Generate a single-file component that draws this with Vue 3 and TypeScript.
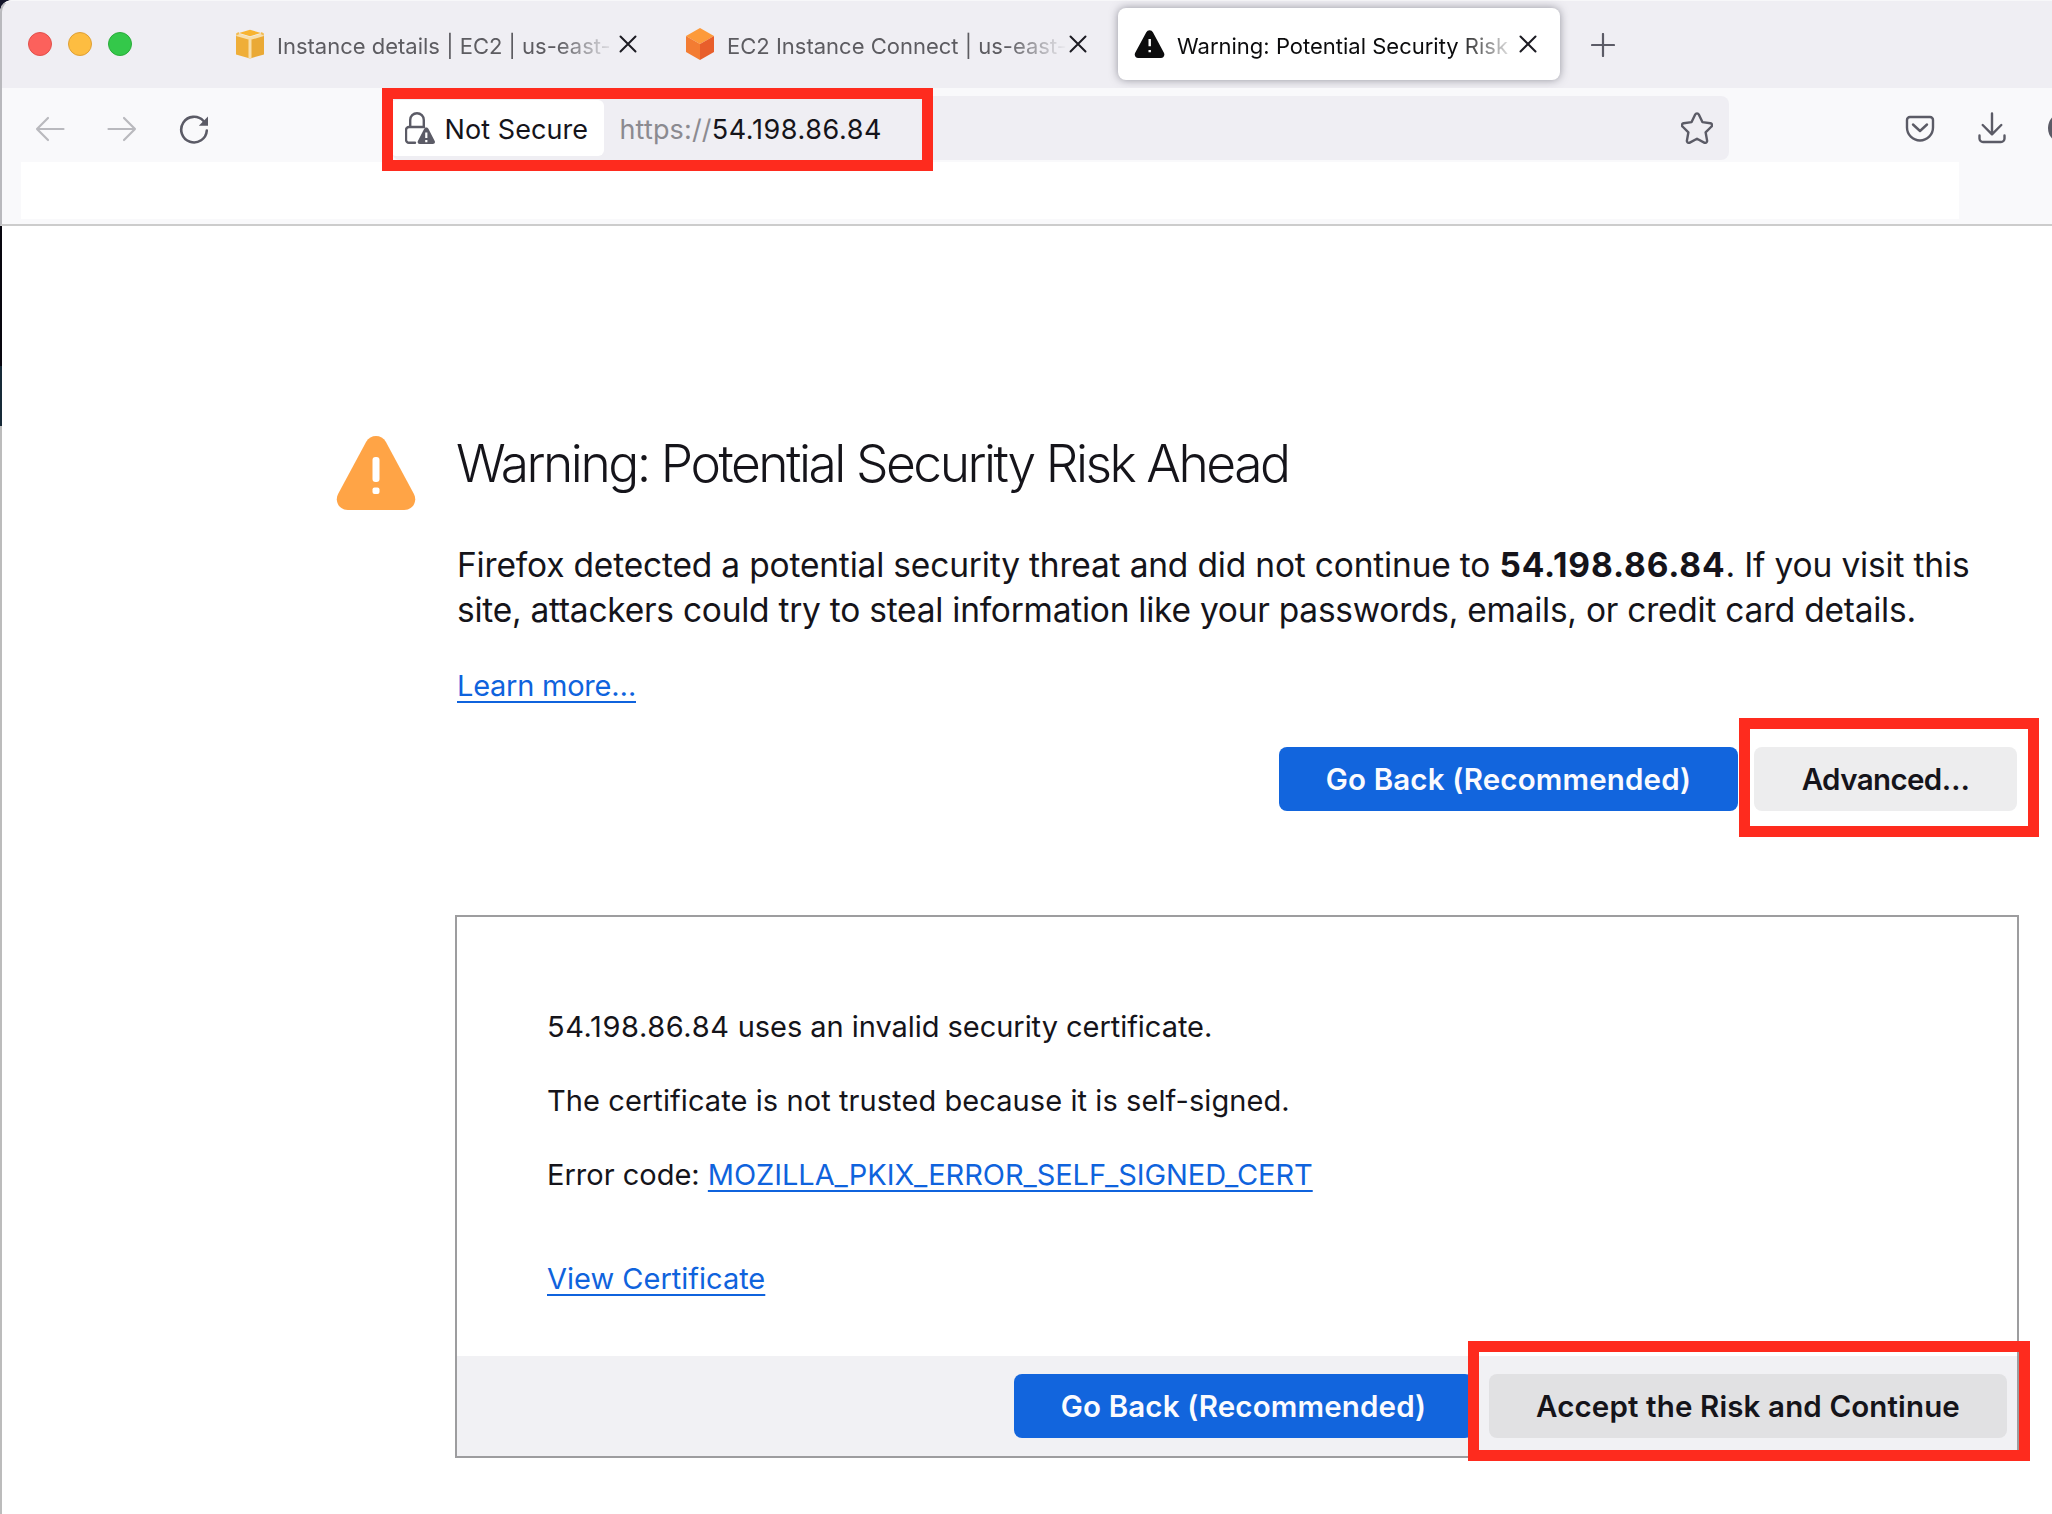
<script setup lang="ts">
interface Tab {
  title: string
  icon: 'console' | 'connect' | 'warning'
  active: boolean
}

const host = '54.198.86.84'

const tabs: Tab[] = [
  { title: 'Instance details | EC2 | us-east-', icon: 'console', active: false },
  { title: 'EC2 Instance Connect | us-east-', icon: 'connect', active: false },
  { title: 'Warning: Potential Security Risk', icon: 'warning', active: true },
]
</script>

<template>
  <div class="window">
    <header class="tabstrip">
      <div class="lights">
        <i class="light close"></i>
        <i class="light minimise"></i>
        <i class="light zoom"></i>
      </div>
      <div class="tabs">
        <div v-for="tab in tabs" :key="tab.title" class="tab" :class="{ active: tab.active }">
          <svg v-if="tab.icon === 'console'" class="favicon" viewBox="0 0 32 32">
            <path d="M2 6 16 10.500v20L2 26.500z" fill="#efae38" />
            <path d="M30 6 16 10.500v20l14-4z" fill="#eaa935" />
            <path d="M16 1.800 27 5 16 8.300 5 5z" fill="#f8b431" />
            <path d="M2.500 6.500 16 10.500l13.500-4M16 10v20.500" fill="none" stroke="#f8dfac" stroke-width="3" />
            <path d="M5 5 2.500 6.300M27 5l2.500 1.300" stroke="#f3bd55" stroke-width="2" />
          </svg>
          <svg v-else-if="tab.icon === 'connect'" class="favicon" viewBox="0 0 32 32">
            <path d="M16 0 30 8 16 16 2 8z" fill="#fd9a3a" />
            <path d="M2 8 16 16v16L2 24z" fill="#f37c32" />
            <path d="M30 8 16 16v16l14-8z" fill="#e85e2b" />
          </svg>
          <svg v-else class="favicon" viewBox="0 0 32 32">
            <path d="M12.300 4.200a3.700 3.700 0 0 1 6.600 0l11 20.500c1.300 2.500-.2 5.300-3 5.300H4.200c-2.800 0-4.300-2.800-3-5.300z" fill="#0c0c0d" />
            <path d="M15.700 11v7.200M15.700 22v2.300" stroke="#fff" stroke-width="2.400" />
          </svg>
          <span class="title">{{ tab.title }}</span>
          <svg class="tab-close" viewBox="0 0 18 18">
            <path d="M1.500 1.500l15 15M16.500 1.500l-15 15" fill="none" stroke="#1c1b22" stroke-width="2" stroke-linecap="round" />
          </svg>
        </div>
      </div>
      <svg class="new-tab" viewBox="0 0 24 24">
        <path d="M12 1v22M1 12h22" fill="none" stroke="#5b5b66" stroke-width="2.200" stroke-linecap="round" />
      </svg>
    </header>

    <div class="toolbar">
      <nav class="nav">
        <svg class="nav-icon dim" viewBox="0 0 32 32">
          <path d="M29.500 16H3M14 5 3 16l11 11" />
        </svg>
        <svg class="nav-icon dim" viewBox="0 0 32 32">
          <path d="M2.500 16H29M18 5l11 11-11 11" />
        </svg>
        <svg class="nav-icon" viewBox="0 0 32 32">
          <path d="M28.800 17.500A12.800 12.800 0 1 1 25.500 8" stroke-width="2.600" />
          <path d="M30 3.500v9.200H20.800z" fill="#5b5b66" stroke="none" />
        </svg>
      </nav>
      <div class="urlbar">
        <div class="identity">
          <svg class="lock" viewBox="0 0 30 32">
            <path d="M5.200 15V8a6.800 6.800 0 0 1 13.600 0V15" fill="none" stroke="#5b5b66" stroke-width="2.400" />
            <path d="M10 30.700H4a3 3 0 0 1-3-3V18a3 3 0 0 1 3-3h15" fill="none" stroke="#5b5b66" stroke-width="2.400" stroke-linecap="round" />
            <path d="M19.200 16.800c1-1.900 3.200-1.900 4.200 0l6.300 12.100c.8 1.500-.2 3.100-1.900 3.100H14.800c-1.700 0-2.700-1.600-1.900-3.100z" fill="#5b5b66" />
            <path d="M21.300 20.500v5.500M21.300 28v2.200" stroke="#fff" stroke-width="2.200" />
          </svg>
          <span class="identity-text">Not Secure</span>
        </div>
        <div class="address"><span class="scheme">https://</span><span class="host">{{ host }}</span></div>
        <svg class="star" viewBox="0 0 32 32">
          <path d="M14.200 2.500c.7-1.500 2.900-1.500 3.600 0l3.600 7.600 8 1.100c1.700.2 2.300 2.200 1.100 3.300l-5.900 5.800 1.500 8.300c.3 1.600-1.400 2.800-2.900 2L16 26.700l-7.200 3.900c-1.500.8-3.200-.4-2.900-2l1.500-8.300-5.900-5.800c-1.200-1.100-.6-3.100 1.100-3.300l8-1.100z" />
        </svg>
      </div>
      <div class="actions">
        <svg class="action" viewBox="0 0 32 32">
          <path d="M6 5h20a3 3 0 0 1 3 3v7.500a13 13 0 0 1-26 0V8a3 3 0 0 1 3-3z" />
          <path d="M9 12.500l7 6.500 7-6.500" />
        </svg>
        <svg class="action" viewBox="0 0 32 32">
          <path d="M16 1.500v20.500M6.700 13l9.300 9.300L25.300 13M3.500 23.500v3a3.500 3.500 0 0 0 3.500 3.500h18a3.500 3.500 0 0 0 3.500-3.500v-3" />
        </svg>
        <i class="account"></i>
      </div>
    </div>
    <div class="bookmarks"><div class="bookmarks-blank"></div></div>

    <div class="content">
      <div class="edge"></div>
      <main class="page">
        <section class="intro">
          <svg class="alert" viewBox="0 0 80 76">
            <path d="M30.200 6.700c4.200-7.700 15.400-7.700 19.600 0l28 52c4 7.500-.8 16.300-9.600 16.300H11.800c-8.800 0-13.600-8.800-9.600-16.300z" fill="#ffa446" />
            <rect x="36.500" y="22" width="7" height="25" rx="3" fill="#fff" />
            <rect x="36.500" y="52.500" width="7" height="6.500" rx="2" fill="#fff" />
          </svg>
          <div class="copy">
            <h1>Warning: Potential Security Risk Ahead</h1>
            <p class="lead">
              <span class="l1">Firefox detected a potential security threat and did not continue to </span><b>{{ host }}</b><span class="l1b">. If you visit this</span><br />
              <span class="l2">site, attackers could try to steal information like your passwords, emails, or credit card details.</span>
            </p>
            <a class="link learn">Learn more…</a>
          </div>
        </section>

        <div class="buttons">
          <button class="btn primary">Go Back (Recommended)</button>
          <button class="btn advanced">Advanced…</button>
        </div>

        <section class="panel">
          <div class="details">
            <p class="cause"><span class="ip">{{ host }}</span> uses an invalid security certificate.</p>
            <p class="trust">The certificate is not trusted because it is self-signed.</p>
            <p>Error code: <a class="link code">MOZILLA_PKIX_ERROR_SELF_SIGNED_CERT</a></p>
            <p class="view"><a class="link">View Certificate</a></p>
          </div>
          <footer class="panel-foot">
            <button class="btn primary">Go Back (Recommended)</button>
            <button class="btn accept">Accept the Risk and Continue</button>
          </footer>
        </section>
      </main>
    </div>

    <i class="mark mark-url"></i>
    <i class="mark mark-advanced"></i>
    <i class="mark mark-accept"></i>
  </div>
</template>

<style>
body {
  background: #14152b;
  overflow: hidden;
}
</style>

<style scoped>
* {
  box-sizing: border-box;
}

.window {
  position: relative;
  width: 2052px;
  height: 1514px;
  overflow: hidden;
  display: flex;
  flex-direction: column;
  background: #fff;
  border-top-left-radius: 12px;
  font-family: Inter, "Liberation Sans", sans-serif;
  color: #15141a;
}

svg {
  display: block;
  flex: none;
}

/* Tab strip */
.tabstrip {
  height: 88px;
  flex: none;
  display: flex;
  align-items: flex-start;
  background: #efeef3;
  border-left: 2px solid #b9b9bd;
  border-top: 1px solid #f7f7f9;
  border-top-left-radius: 12px;
}

.lights {
  display: flex;
  gap: 16px;
  margin: 31px 0 0 26px;
}

.light {
  width: 24px;
  height: 24px;
  border-radius: 50%;
  border: 1px solid;
}

.close { background: #fc615c; border-color: #e2504b; }
.minimise { background: #fdbd41; border-color: #dfa036; }
.zoom { background: #34c84a; border-color: #2aac3a; }

.tabs {
  display: flex;
  gap: 8px;
  margin: 7px 0 0 86px;
}

.tab {
  width: 442px;
  height: 72px;
  display: flex;
  align-items: center;
  padding: 0 24px 0 16px;
  border-radius: 8px;
  color: #5d5c61;
}

.tab.active {
  background: #fff;
  color: #0c0c0d;
  box-shadow: 0 0 8px rgba(60, 60, 75, 0.5);
}

.favicon {
  width: 32px;
  height: 32px;
}

.title {
  flex: none;
  width: 342px;
  margin: 4px 0 0 11px;
  white-space: nowrap;
  font-size: 22px;
  line-height: 30px;
  -webkit-mask-image: linear-gradient(to right, #000 280px, transparent 340px);
  mask-image: linear-gradient(to right, #000 280px, transparent 340px);
}

.tab-close {
  width: 18px;
  height: 18px;
}

.new-tab {
  width: 24px;
  height: 24px;
  margin: 32px 0 0 31px;
}

/* Navigation toolbar */
.toolbar {
  height: 74px;
  flex: none;
  display: flex;
  align-items: flex-start;
  padding-top: 8px;
  background: #f9f9fb;
  border-left: 2px solid #b9b9bd;
}

.nav {
  flex: none;
  display: flex;
  gap: 40px;
  margin: 17px 0 0 32px;
}

.nav-icon {
  width: 32px;
  height: 32px;
  fill: none;
  stroke: #5b5b66;
  stroke-width: 2.2;
  stroke-linecap: round;
  stroke-linejoin: round;
}

.nav-icon.dim {
  stroke: #b9b9be;
}

.urlbar {
  flex: none;
  width: 1337px;
  height: 64px;
  margin-left: 182px;
  display: flex;
  align-items: center;
  padding-right: 16px;
  border-radius: 8px;
  background: #efeef3;
}

.identity {
  flex: none;
  width: 214px;
  height: 56px;
  display: flex;
  align-items: center;
  padding-left: 15px;
  border-radius: 6px;
  background: #fff;
  margin-left: -2px;
}

.lock {
  width: 30px;
  height: 32px;
}

.identity-text,
.address {
  font-size: 27px;
  line-height: 36px;
  white-space: nowrap;
  padding-top: 4px;
}

.identity-text {
  margin-left: 9.5px;
  letter-spacing: 0.08px;
}

.address {
  flex: 1;
  margin-left: 15.500px;
}

.scheme {
  color: #8b8a90;
  letter-spacing: 0.15px;
}

.host {
  letter-spacing: 0.6px;
}

.star {
  width: 32px;
  height: 32px;
  fill: none;
  stroke: #5b5b66;
  stroke-width: 2.4;
  stroke-linejoin: round;
}

.actions {
  flex: none;
  display: flex;
  align-items: center;
  gap: 40px;
  margin: 16px 0 0 175px;
}

.action {
  width: 32px;
  height: 32px;
  fill: none;
  stroke: #5b5b66;
  stroke-width: 2.4;
  stroke-linecap: round;
  stroke-linejoin: round;
}

.account {
  flex: none;
  width: 32px;
  height: 32px;
  border-radius: 50%;
  background: #5b5b66;
}

/* Bookmarks bar */
.bookmarks {
  height: 64px;
  flex: none;
  padding-left: 19px;
  background: #f9f9fb;
  border-left: 2px solid #b9b9bd;
  border-bottom: 2px solid #cccccc;
}

.bookmarks-blank {
  width: 1938px;
  height: 57px;
  background: #fff;
}

/* Page content */
.content {
  flex: 1;
  display: flex;
}

.edge {
  width: 2px;
  flex: none;
  background: linear-gradient(#08060f 0 140px, #172a38 140px 200px, #bcbcbc 200px);
}

.page {
  width: 2017px;
  padding: 207px 0 0 334px;
}

.intro {
  display: flex;
  height: 314px;
}

.alert {
  width: 80px;
  height: 76px;
  margin-top: 2px;
}

.copy {
  margin-left: 41px;
}

h1 {
  margin: 0 0 0 -1px;
  font-size: 51.500px;
  font-weight: 300;
  line-height: 60px;
  letter-spacing: -2.48px;
  white-space: nowrap;
}

.lead {
  margin: 50px 0 30px;
  font-size: 33.500px;
  line-height: 45px;
  white-space: nowrap;
}

.lead b {
  font-weight: 700;
  letter-spacing: 0.84px;
}

.l1 { letter-spacing: -0.18px; }
.l1b { letter-spacing: -0.16px; }
.l2 { letter-spacing: -0.25px; }

.link {
  color: #0f63dd;
  text-decoration: underline 2px;
  text-underline-offset: 5px;
  text-decoration-skip-ink: none;
}

.learn {
  display: inline-block;
  font-size: 29px;
  line-height: 40px;
  margin-top: 3px;
  letter-spacing: -0.25px;
}

.buttons {
  display: flex;
  justify-content: flex-end;
  gap: 16px;
  padding-right: 2px;
}

.btn {
  flex: none;
  height: 64px;
  border: 0;
  padding: 0;
  border-radius: 8px;
  font: 600 29.5px/64px Inter, "Liberation Sans", sans-serif;
  color: #15141a;
  text-align: center;
  white-space: nowrap;
}

.primary {
  width: 459px;
  background: #1265dd;
  color: #fbfbfe;
  letter-spacing: 0.15px;
}

.advanced {
  width: 263px;
  background: #ededee;
  letter-spacing: -0.6px;
}

.accept {
  width: 518px;
  background: #e1e1e3;
  letter-spacing: 0.13px;
}

.panel {
  width: 1564px;
  height: 543px;
  margin: 104px 0 0 119px;
  display: flex;
  flex-direction: column;
  border: 2px solid #9d9d9f;
}

.details {
  flex: 1;
  padding: 90px 0 0 90px;
  font-size: 29px;
  line-height: 40px;
  white-space: nowrap;
}

.details p {
  margin: 0 0 34px;
}

.details .cause { letter-spacing: -0.04px; }
.details .trust { letter-spacing: 0.08px; }
.details .view { margin-top: 64px; }
.details .ip { letter-spacing: 0.6px; }
.code { letter-spacing: -0.06px; }

.panel-foot {
  height: 100px;
  display: flex;
  justify-content: flex-end;
  align-items: center;
  gap: 16px;
  padding-right: 10px;
  background: #f1f1f4;
}

/* Red callouts laid over the window */
.mark {
  position: absolute;
  border: 11px solid #fe2b1e;
}

.mark-url {
  left: 382px;
  top: 88px;
  width: 551px;
  height: 83px;
}

.mark-advanced {
  left: 1739px;
  top: 718px;
  width: 300px;
  height: 119px;
}

.mark-accept {
  left: 1468px;
  top: 1341px;
  width: 562px;
  height: 120px;
}
</style>
